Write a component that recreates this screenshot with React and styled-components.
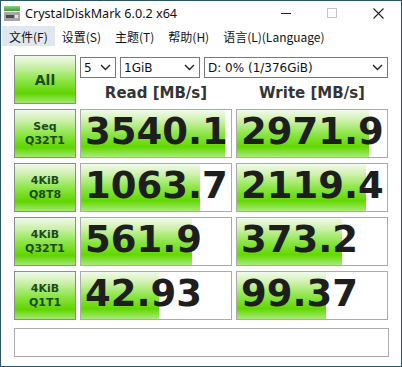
import React from "react";
import styled, { createGlobalStyle } from "styled-components";

const GlobalStyle = createGlobalStyle`
  html, body {
    margin: 0;
    padding: 0;
    background: #fff;
  }
  body {
    width: 402px;
    height: 367px;
    overflow: hidden;
  }
`;

const Window = styled.div`
  box-sizing: border-box;
  width: 402px;
  height: 367px;
  border: 1px solid #2c5566;
  background: #fff;
  display: flex;
  flex-direction: column;
`;

const TitleBar = styled.div`
  display: flex;
  align-items: center;
  height: 24px;
  padding-left: 3px;
  font-family: "Noto Sans", sans-serif;
  font-size: 12.6px;
  color: #111;
`;

const AppTitle = styled.span`
  margin-left: 5px;
`;

const Controls = styled.div`
  display: flex;
  margin-left: auto;
  height: 100%;
`;

const CtrlButton = styled.div`
  width: 46px;
  display: flex;
  align-items: center;
  justify-content: center;
`;

const MenuBar = styled.div`
  display: flex;
  height: 23px;
  padding-left: 1px;
  font-family: "Noto Sans CJK SC", "Noto Sans", sans-serif;
  font-size: 12px;
  color: #111;
`;

const MenuItem = styled.div`
  display: flex;
  align-items: center;
  padding: 0 7px;
  margin: 1px 0 2px;
  background: ${(p) => (p.$active ? "#e0e8ef" : "transparent")};
`;

const Body = styled.div`
  padding: 7px 12px 0 13px;
  display: flex;
  flex-direction: column;
`;

const Board = styled.div`
  display: grid;
  grid-template-columns: 62px 152px 152px;
  grid-auto-rows: 49px;
  column-gap: 4px;
  row-gap: 5px;
`;

const TestButton = styled.div`
  box-sizing: border-box;
  border: 1px solid #8c8c8c;
  background: linear-gradient(
    to bottom,
    #f0faea 0%,
    #cdf0ad 22%,
    #8be546 52%,
    #60d500 80%,
    #a4e872 100%
  );
  display: flex;
  align-items: center;
  justify-content: center;
  text-align: center;
  font-family: "DejaVu Sans", sans-serif;
  font-weight: bold;
  font-size: ${(p) => (p.$big ? "14px" : "11px")};
  line-height: ${(p) => (p.$big ? "16px" : "14px")};
  color: #1d4a1d;
`;

const TopArea = styled.div`
  grid-column: 2 / 4;
  display: flex;
  flex-direction: column;
  padding-top: 2px;
`;

const SelectRow = styled.div`
  display: flex;
  gap: 4px;
`;

const Select = styled.div`
  box-sizing: border-box;
  width: ${(p) => p.$w}px;
  height: 21px;
  border: 1px solid #7a7a7a;
  display: flex;
  align-items: center;
  justify-content: space-between;
  padding: 0 4px 0 3px;
  font-family: "DejaVu Sans", sans-serif;
  font-size: 12px;
  color: #111;
`;

const HeaderRow = styled.div`
  display: grid;
  grid-template-columns: 152px 152px;
  column-gap: 4px;
  margin-top: 6px;
`;

const Header = styled.div`
  text-align: center;
  font-family: "DejaVu Sans", sans-serif;
  font-weight: bold;
  font-size: 15px;
  line-height: 18px;
  color: #353535;
`;

const Meter = styled.div`
  position: relative;
  box-sizing: border-box;
  border: 1px solid #ababab;
  background: #fff;
  overflow: hidden;
`;

const MeterFill = styled.div`
  position: absolute;
  left: 0;
  top: 0;
  bottom: 0;
  background: linear-gradient(
    to bottom,
    #f2fbec 0%,
    #cff1ae 22%,
    #8ee64a 50%,
    #62d800 78%,
    #a8ea78 100%
  );
`;

const Value = styled.div`
  position: relative;
  padding: 0 0 3px 4px;
  font-family: "DejaVu Sans", sans-serif;
  font-weight: bold;
  font-size: 37px;
  line-height: 44px;
  color: #1e1e1e;
  white-space: nowrap;
`;

const Comment = styled.div`
  box-sizing: border-box;
  margin-top: 8px;
  height: 29px;
  border: 1px solid #ababab;
  background: #fff;
`;

const Chevron = () => (
  <svg width="11" height="7" viewBox="0 0 11 7">
    <path d="M1 1l4.5 4.5L10 1" fill="none" stroke="#222" strokeWidth="1.4" />
  </svg>
);

const AppIcon = () => (
  <svg width="16" height="15" viewBox="0 0 16 15">
    <defs>
      <linearGradient id="ig" x1="0" y1="0" x2="0" y2="1">
        <stop offset="0" stopColor="#8fd27e" />
        <stop offset="1" stopColor="#3f9a3a" />
      </linearGradient>
    </defs>
    <rect x="0" y="0" width="16" height="5" fill="url(#ig)" />
    <rect x="0" y="6" width="16" height="9" fill="#a7a7a7" />
    <rect x="2" y="9" width="8" height="3" fill="#4a4a4a" />
    <rect x="11" y="9" width="3" height="3" fill="#e4e4e4" />
  </svg>
);

const rows = [
  { label: ["Seq", "Q32T1"], read: "3540.1", rw: 96, write: "2971.9", ww: 88 },
  { label: ["4KiB", "Q8T8"], read: "1063.7", rw: 79, write: "2119.4", ww: 86 },
  { label: ["4KiB", "Q32T1"], read: "561.9", rw: 74, write: "373.2", ww: 70 },
  { label: ["4KiB", "Q1T1"], read: "42.93", rw: 52, write: "99.37", ww: 59 },
];

const menus = ["文件(F)", "设置(S)", "主题(T)", "帮助(H)", "语言(L)(Language)"];

const Cell = ({ value, pct }) => (
  <Meter>
    <MeterFill style={{ width: `${pct}%` }} />
    <Value>{value}</Value>
  </Meter>
);

export default function App() {
  return (
    <>
      <GlobalStyle />
      <Window>
        <TitleBar>
          <AppIcon />
          <AppTitle>CrystalDiskMark 6.0.2 x64</AppTitle>
          <Controls>
            <CtrlButton>
              <svg width="10" height="10" viewBox="0 0 10 10">
                <path d="M0 5.5h10" stroke="#222" strokeWidth="1" />
              </svg>
            </CtrlButton>
            <CtrlButton>
              <svg width="10" height="10" viewBox="0 0 10 10">
                <rect x="0.5" y="0.5" width="9" height="9" fill="none" stroke="#c4c4c4" />
              </svg>
            </CtrlButton>
            <CtrlButton>
              <svg width="11" height="11" viewBox="0 0 11 11">
                <path d="M0.5 0.5l10 10M10.5 0.5l-10 10" stroke="#222" strokeWidth="1.1" />
              </svg>
            </CtrlButton>
          </Controls>
        </TitleBar>
        <MenuBar>
          {menus.map((m, i) => (
            <MenuItem key={m} $active={i === 0}>
              {m}
            </MenuItem>
          ))}
        </MenuBar>
        <Body>
          <Board>
            <TestButton $big>All</TestButton>
            <TopArea>
              <SelectRow>
                <Select $w={36}>
                  <span>5</span>
                  <Chevron />
                </Select>
                <Select $w={80}>
                  <span>1GiB</span>
                  <Chevron />
                </Select>
                <Select $w={184}>
                  <span>D: 0% (1/376GiB)</span>
                  <Chevron />
                </Select>
              </SelectRow>
              <HeaderRow>
                <Header>Read [MB/s]</Header>
                <Header>Write [MB/s]</Header>
              </HeaderRow>
            </TopArea>
            {rows.map((r) => (
              <React.Fragment key={r.label.join("-")}>
                <TestButton>
                  {r.label[0]}
                  <br />
                  {r.label[1]}
                </TestButton>
                <Cell value={r.read} pct={r.rw} />
                <Cell value={r.write} pct={r.ww} />
              </React.Fragment>
            ))}
          </Board>
          <Comment />
        </Body>
      </Window>
    </>
  );
}
